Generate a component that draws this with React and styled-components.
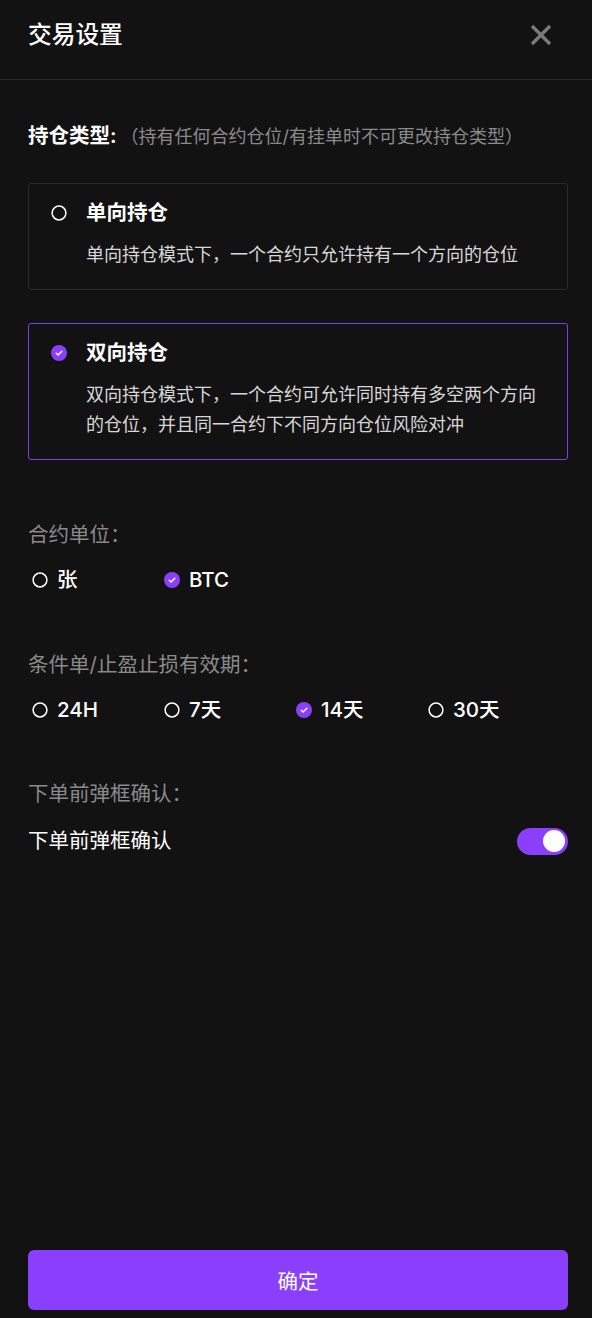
import React, { useState } from "react";
import styled, { createGlobalStyle } from "styled-components";

const GlobalStyle = createGlobalStyle`
  html, body { margin: 0; padding: 0; background: #121212; }
  body { font-family: Inter, "Noto Sans CJK SC", sans-serif; color: #fff; }
  * { box-sizing: border-box; }
`;

const Page = styled.div`
  min-height: 1318px;
  display: flex;
  flex-direction: column;
  background: #121212;
`;

const Header = styled.header`
  height: 80px;
  padding: 0 0 9px 28px;
  display: flex;
  align-items: center;
  justify-content: space-between;
  border-bottom: 1px solid #2a2a2a;
`;

const Title = styled.h1`
  margin: 0;
  font-size: 23.7px;
  line-height: 32px;
  font-weight: 500;
  color: #fff;
`;

const CloseButton = styled.button`
  width: 22px;
  height: 22px;
  margin-right: 40px;
  padding: 0;
  border: 0;
  background: none;
  display: flex;
  cursor: pointer;
`;

const Content = styled.main`
  padding: 41px 24px 0 28px;
  display: flex;
  flex-direction: column;
`;

const SectionHeading = styled.div`
  font-size: 20.5px;
  line-height: 30px;
  font-weight: 600;
  color: #fff;
  white-space: nowrap;
`;

const Hint = styled.span`
  font-size: 18px;
  font-weight: 400;
  color: #8a8a8a;
  margin-left: 4px;
`;

const CardList = styled.div`
  margin-top: 31px;
  display: flex;
  flex-direction: column;
  gap: 33px;
`;

const ModeCard = styled.div`
  border: 1px solid ${(p) => (p.$active ? "#7c3fec" : "#2b2b2b")};
  border-radius: 3px;
  padding: 14px 20px 19px 22px;
  cursor: pointer;
`;

const CardHead = styled.div`
  display: flex;
  align-items: center;
  gap: 19px;
  line-height: 30px;
`;

const CardTitle = styled.div`
  font-size: 20.5px;
  font-weight: 600;
  color: #fff;
`;

const CardDesc = styled.p`
  margin: 12px 0 0;
  padding-left: 35px;
  font-size: 18px;
  line-height: 30px;
  color: #d8d8d8;
`;

const Section = styled.section`
  margin-top: ${(p) => p.$gap}px;
  display: flex;
  flex-direction: column;
`;

const SectionLabel = styled.div`
  font-size: 20.5px;
  line-height: 30px;
  color: #8a8a8a;
`;

const OptionRow = styled.div`
  margin-top: 15px;
  padding-left: 4px;
  display: flex;
`;

const OptionItem = styled.label`
  width: 132px;
  display: flex;
  align-items: center;
  gap: 9px;
  font-size: 20.5px;
  line-height: 30px;
  font-weight: 500;
  color: #fff;
  cursor: pointer;
`;

const RadioIcon = styled.svg`
  width: 16px;
  height: 16px;
  flex: none;
`;

const SwitchRow = styled.div`
  margin-top: 17px;
  display: flex;
  align-items: center;
  justify-content: space-between;
`;

const SwitchLabel = styled.div`
  font-size: 20.5px;
  line-height: 30px;
  font-weight: 400;
  color: #fff;
`;

const Toggle = styled.button`
  width: 51px;
  height: 27px;
  border: 0;
  border-radius: 14px;
  padding: 0 3px;
  background: ${(p) => (p.$on ? "#8a3ffc" : "#3a3a3a")};
  display: flex;
  align-items: center;
  justify-content: ${(p) => (p.$on ? "flex-end" : "flex-start")};
  cursor: pointer;
`;

const Knob = styled.span`
  width: 22px;
  height: 22px;
  border-radius: 50%;
  background: #fff;
`;

const Footer = styled.footer`
  margin-top: auto;
  padding: 0 24px 8px 28px;
`;

const ConfirmButton = styled.button`
  width: 100%;
  height: 60px;
  border: 0;
  border-radius: 6px;
  background: #8a3ffc;
  color: #fff;
  font-family: inherit;
  font-size: 20.5px;
  cursor: pointer;
`;

function Radio({ checked }) {
  return checked ? (
    <RadioIcon viewBox="0 0 16 16">
      <circle cx="8" cy="8" r="8" fill="#8a3ffc" />
      <path d="M5.2 8.2 L7.1 10 L10.8 6.2" fill="none" stroke="#fff" strokeWidth="1.4" strokeLinecap="round" strokeLinejoin="round" />
    </RadioIcon>
  ) : (
    <RadioIcon viewBox="0 0 16 16">
      <circle cx="8" cy="8" r="6.9" fill="none" stroke="#fff" strokeWidth="1.5" />
    </RadioIcon>
  );
}

const modes = [
  { id: "one", title: "单向持仓", desc: "单向持仓模式下，一个合约只允许持有一个方向的仓位" },
  { id: "two", title: "双向持仓", desc: "双向持仓模式下，一个合约可允许同时持有多空两个方向的仓位，并且同一合约下不同方向仓位风险对冲" },
];

export default function App() {
  const [mode, setMode] = useState("two");
  const [unit, setUnit] = useState("BTC");
  const [period, setPeriod] = useState("14天");
  const [confirm, setConfirm] = useState(true);

  return (
    <Page>
      <GlobalStyle />
      <Header>
        <Title>交易设置</Title>
        <CloseButton aria-label="关闭">
          <svg width="22" height="22" viewBox="0 0 22 22">
            <path d="M2 2 L20 20 M20 2 L2 20" stroke="#7a7a7a" strokeWidth="3.4" strokeLinecap="butt" />
          </svg>
        </CloseButton>
      </Header>
      <Content>
        <SectionHeading>
          持仓类型:<Hint>（持有任何合约仓位/有挂单时不可更改持仓类型）</Hint>
        </SectionHeading>
        <CardList>
          {modes.map((m) => (
            <ModeCard key={m.id} $active={mode === m.id} onClick={() => setMode(m.id)}>
              <CardHead>
                <Radio checked={mode === m.id} />
                <CardTitle>{m.title}</CardTitle>
              </CardHead>
              <CardDesc>{m.desc}</CardDesc>
            </ModeCard>
          ))}
        </CardList>

        <Section $gap={60}>
          <SectionLabel>合约单位：</SectionLabel>
          <OptionRow>
            {["张", "BTC"].map((u) => (
              <OptionItem key={u} onClick={() => setUnit(u)}>
                <Radio checked={unit === u} />
                {u}
              </OptionItem>
            ))}
          </OptionRow>
        </Section>

        <Section $gap={55}>
          <SectionLabel>条件单/止盈止损有效期：</SectionLabel>
          <OptionRow>
            {["24H", "7天", "14天", "30天"].map((p) => (
              <OptionItem key={p} onClick={() => setPeriod(p)}>
                <Radio checked={period === p} />
                {p}
              </OptionItem>
            ))}
          </OptionRow>
        </Section>

        <Section $gap={54}>
          <SectionLabel>下单前弹框确认：</SectionLabel>
          <SwitchRow>
            <SwitchLabel>下单前弹框确认</SwitchLabel>
            <Toggle $on={confirm} onClick={() => setConfirm(!confirm)} aria-label="toggle">
              <Knob />
            </Toggle>
          </SwitchRow>
        </Section>
      </Content>
      <Footer>
        <ConfirmButton>确定</ConfirmButton>
      </Footer>
    </Page>
  );
}
